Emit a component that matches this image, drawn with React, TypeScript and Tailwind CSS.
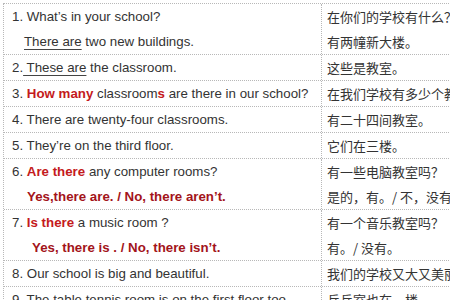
import type { ReactNode } from "react";

type Row = { en: ReactNode[]; zh: string[] };

const red = "font-bold text-[#c41a20]";
const answer = "font-bold text-[#a3141a]";

const ROWS: Row[] = [
  {
    en: [
      <>1. What’s in your school?</>,
      <span className="pl-3">
        <span className="underline decoration-[#444] underline-offset-[3px]">There are</span> two new buildings.
      </span>,
    ],
    zh: ["在你们的学校有什么？", "有两幢新大楼。"],
  },
  {
    en: [
      <>
        2.<span className="underline decoration-[#444] underline-offset-[3px]"> These are</span> the classroom.
      </>,
    ],
    zh: ["这些是教室。"],
  },
  {
    en: [
      <>
        3. <span className={red}>How many</span> classroom<span className={red}>s</span> are there in our school?
      </>,
    ],
    zh: ["在我们学校有多少个教室？"],
  },
  { en: [<>4. There are twenty-four classrooms.</>], zh: ["有二十四间教室。"] },
  { en: [<>5. They’re on the third floor.</>], zh: ["它们在三楼。"] },
  {
    en: [
      <>
        6. <span className={red}>Are there</span> any computer rooms?
      </>,
      <span className={`pl-[15px] ${answer}`}>Yes,there are. / No, there aren’t.</span>,
    ],
    zh: ["有一些电脑教室吗？", "是的，有。/ 不，没有。"],
  },
  {
    en: [
      <>
        7. <span className={red}>Is there</span> a music room ?
      </>,
      <span className={`pl-5 ${answer}`}>Yes, there is . / No, there isn’t.</span>,
    ],
    zh: ["有一个音乐教室吗？", "有。/ 没有。"],
  },
  { en: [<>8. Our school is big and beautiful.</>], zh: ["我们的学校又大又美丽。"] },
  { en: [<>9. The table tennis room is on the first floor too.</>], zh: ["乒乓室也在一楼。"] },
];

export default function App() {
  return (
    <div className="w-[450px] h-[300px] overflow-hidden bg-white">
      <div className="w-[600px] ml-[3px] mt-[3px] border-l border-t border-dotted border-[#b8b8b8] text-[13.3px] text-[#333] font-['Liberation_Sans',Arial,sans-serif]">
        {ROWS.map((row, i) => (
          <div key={i} className="grid grid-cols-[318px_1fr] border-b border-dotted border-[#b8b8b8]">
            <div className="border-r border-dotted border-[#b8b8b8] pl-2 flex flex-col">
              {row.en.map((line, j) => (
                <div key={j} className="h-[25px] leading-[25px] whitespace-nowrap">
                  {line}
                </div>
              ))}
            </div>
            <div className="pl-[5px] flex flex-col text-[13px] font-['Noto_Sans_CJK_SC','Liberation_Sans',sans-serif] text-[#333]">
              {row.zh.map((line, j) => (
                <div key={j} className="h-[25px] leading-[25px] whitespace-nowrap">
                  {line}
                </div>
              ))}
            </div>
          </div>
        ))}
      </div>
    </div>
  );
}
